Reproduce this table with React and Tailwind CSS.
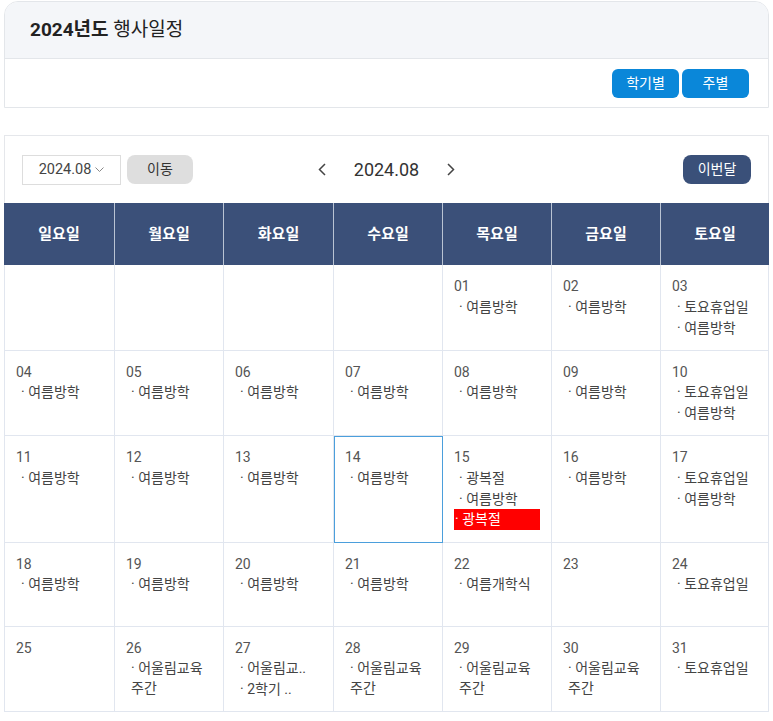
import React from 'react';

const days = ['일요일', '월요일', '화요일', '수요일', '목요일', '금요일', '토요일'];

const V = '여름방학';
const S = '토요휴업일';
const E = '어울림교육 주간';

const events = {
    1: [V], 2: [V], 3: [S, V],
    4: [V], 5: [V], 6: [V], 7: [V], 8: [V], 9: [V], 10: [S, V],
    11: [V], 12: [V], 13: [V], 14: [V], 15: ['광복절', V], 16: [V], 17: [S, V],
    18: [V], 19: [V], 20: [V], 21: [V], 22: ['여름개학식'], 23: [], 24: [S],
    25: [], 26: [E], 27: ['어울림교..', '2학기 ..'], 28: [E], 29: [E], 30: [E], 31: [S],
};

const holidays = { 15: '광복절' };

const cells = [null, null, null, null];
for (let d = 1; d <= 31; d++) cells.push(d);

const font = { fontFamily: '"Roboto", "Noto Sans CJK KR", sans-serif' };

const Cell = ({ day, col }) => {
    const selected = day === 14;
    return (
        <div
            className={`min-h-[84px] px-[11px] pt-[11px] pb-[11.5px] border-b border-r border-[#e1e6ef] ${col === 0 ? 'border-l' : ''} ${selected ? 'relative outline outline-1 outline-[#4b9fdc] -outline-offset-1' : ''}`}
        >
            {day && (
                <>
                    <div className="text-[14px] leading-[20px] text-[#555]">{String(day).padStart(2, '0')}</div>
                    {events[day].map((ev, i) => (
                        <div key={i} className="pl-[5px] text-[14px] leading-[20px] py-[0.5px] text-[#444]">· {ev}</div>
                    ))}
                    {holidays[day] && (
                        <div className="bg-[#ff0000] pl-[1px] text-[14px] leading-[21px] text-white">· {holidays[day]}</div>
                    )}
                </>
            )}
        </div>
    );
};

const App = () => {
    return (
        <div className="bg-white px-[4px] pt-[1px]" style={font}>
            {/* title panel */}
            <div className="border border-[#e3e6ea] rounded-t-[14px] overflow-hidden">
                <div className="h-[57px] bg-[#f4f6f9] border-b border-[#e3e6ea] flex items-center pl-[25px]">
                    <h1 className="text-[19px] text-[#222]">
                        <span className="font-bold">2024년도</span> 행사일정
                    </h1>
                </div>
                <div className="h-[48px] flex items-center justify-end gap-[3px] pr-[19px]">
                    <button className="w-[67px] h-[29px] rounded-[6px] bg-[#0a87d9] text-white text-[14px]">학기별</button>
                    <button className="w-[67px] h-[29px] rounded-[6px] bg-[#0a87d9] text-white text-[14px]">주별</button>
                </div>
            </div>

            {/* calendar panel */}
            <div className="mt-[27px]">
                <div className="h-[68px] border-t border-x border-[#e5e7eb] grid grid-cols-[1fr_auto_1fr] items-center px-[17px]">
                    <div className="flex items-center gap-[6px]">
                        <div className="w-[99px] h-[30px] border border-[#ddd] flex items-center justify-center gap-[4px] text-[14.5px] text-[#444]">
                            2024.08
                            <svg width="9" height="6" viewBox="0 0 9 6" fill="none" stroke="#888" strokeWidth="1">
                                <polyline points="0.5,0.5 4.5,4.5 8.5,0.5" />
                            </svg>
                        </div>
                        <button className="w-[66px] h-[29px] rounded-[8px] bg-[#dedede] text-[14px] text-[#333]">이동</button>
                    </div>
                    <div className="flex items-center gap-[28px] text-[#333]">
                        <svg width="8" height="13" viewBox="0 0 8 13" fill="none" stroke="#444" strokeWidth="1.5">
                            <polyline points="7,1 1.5,6.5 7,12" />
                        </svg>
                        <span className="text-[18px]">2024.08</span>
                        <svg width="8" height="13" viewBox="0 0 8 13" fill="none" stroke="#444" strokeWidth="1.5">
                            <polyline points="1,1 6.5,6.5 1,12" />
                        </svg>
                    </div>
                    <div className="flex justify-end">
                        <button className="w-[68px] h-[29px] rounded-[8px] bg-[#3a5079] text-white text-[14px]">이번달</button>
                    </div>
                </div>

                <div className="grid grid-cols-[111px_109px_110px_109px_109px_109px_1fr] bg-[#3b5079] h-[62px]">
                    {days.map((d, i) => (
                        <div
                            key={d}
                            className={`flex items-center justify-center text-white font-bold text-[15px] ${i < 6 ? 'border-r border-[#b9c3d3]' : ''}`}
                        >
                            {d}
                        </div>
                    ))}
                </div>

                <div className="grid grid-cols-[111px_109px_110px_109px_109px_109px_1fr]">
                    {cells.map((day, i) => (
                        <Cell key={i} day={day} col={i % 7} />
                    ))}
                </div>
            </div>
        </div>
    );
};

export default App;
